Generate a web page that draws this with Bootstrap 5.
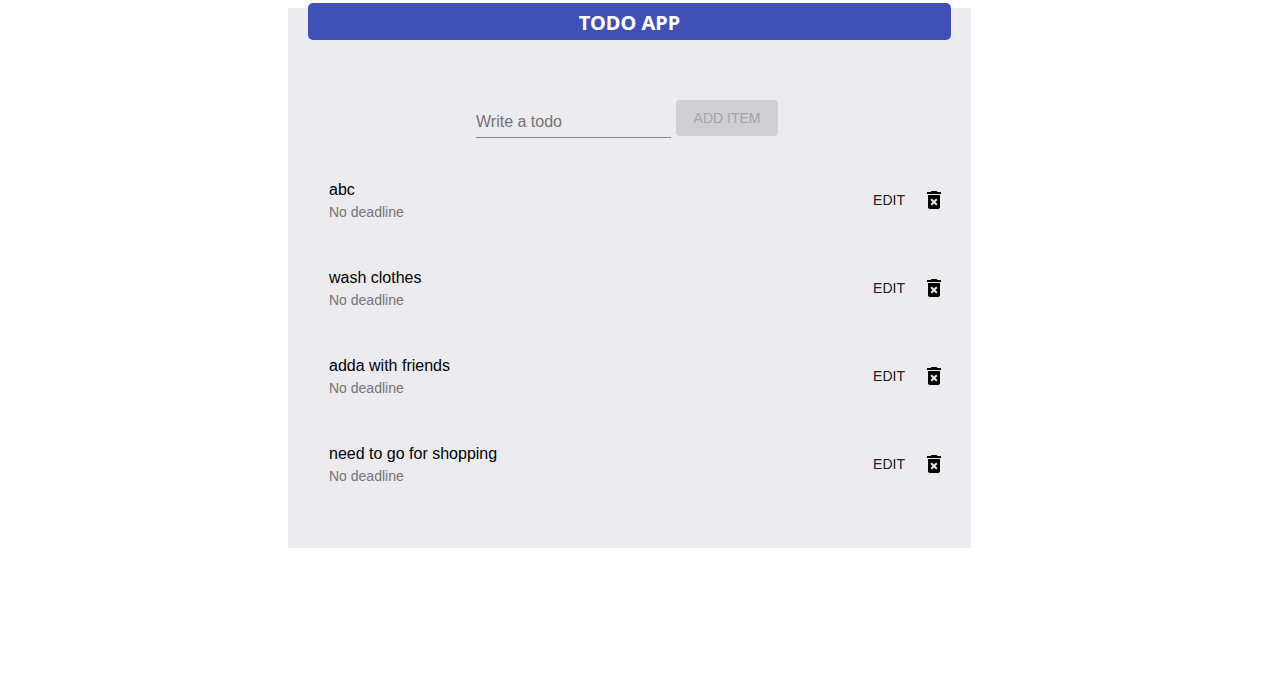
<!DOCTYPE html>
<html lang="en">
<head>
<meta charset="utf-8">
<meta name="viewport" content="width=device-width, initial-scale=1">
<title>Todo App</title>
<link href="https://cdn.jsdelivr.net/npm/bootstrap@5.3.0/dist/css/bootstrap.min.css" rel="stylesheet">
<style>
body { padding: 8px 10px 8px 8px; font-family: "Liberation Sans", Arial, sans-serif; color: #000; background: #fff; }
.todo-panel { max-width: 683px; padding: 0 20px 40px; background: #ecebf0; }
.app-title { margin: -5px 0 60px; border-radius: 5px; padding: 3px 0 0; background: #3f51b5; color: #fff; font: 700 20px/34px "Noto Sans", "Open Sans", sans-serif; }
.todo-form { gap: 5px; margin-bottom: 18px; padding-right: 5px; }
.todo-input { width: 195px; height: 38px; padding: 6px 0 0; border: 0; border-bottom: 1px solid #87868a; border-radius: 0; background: transparent; }
.todo-input::placeholder { color: #747377; opacity: 1; }
.todo-input:focus { outline: 0; border-color: #3f51b5; }
.add-btn { width: 102px; height: 36px; border: 0; border-radius: 4px; padding: 0; background: #d0cfd4; color: #a6a5a8; font-size: 14px; }
.todo-item { height: 88px; padding: 0 5px 0 21px; }
.todo-name { line-height: 24px; }
.todo-note { font-size: 14px; line-height: 20px; color: #747377; }
.edit-btn { width: 66px; height: 36px; border: 0; padding: 0; background: none; color: #212121; font-size: 14px; }
.delete-btn { border: 0; padding: 0; background: none; }
</style>
</head>
<body>
<main class="todo-panel d-flex flex-column mx-auto">
<h1 class="app-title text-center">TODO APP</h1>
<form class="todo-form d-flex justify-content-center">
<input class="todo-input" type="text" placeholder="Write a todo" aria-label="Write a todo">
<button class="add-btn" type="submit" disabled>ADD ITEM</button>
</form>
<ul class="list-unstyled mb-0" id="list"></ul>
</main>
<script src="https://cdn.jsdelivr.net/npm/bootstrap@5.3.0/dist/js/bootstrap.bundle.min.js"></script>
<script>
document.getElementById('list').innerHTML = ['abc', 'wash clothes', 'adda with friends', 'need to go for shopping'].map(t => `
<li class="todo-item d-flex align-items-center">
<div class="me-auto"><div class="todo-name">${t}</div><div class="todo-note">No deadline</div></div>
<button class="edit-btn" type="button">EDIT</button>
<button class="delete-btn" type="button" aria-label="Delete ${t}"><svg class="d-block" width="24" height="24" viewBox="0 0 24 24"><path d="M6 19c0 1.100.9 2 2 2h8c1.100 0 2-.9 2-2V7H6v12zm2.460-7.120l1.410-1.410L12 12.590l2.120-2.120 1.410 1.410L13.410 14l2.120 2.120-1.410 1.410L12 15.410l-2.120 2.120-1.410-1.410L10.590 14l-2.130-2.120zM15.500 4l-1-1h-5l-1 1H5v2h14V4z"/></svg></button>
</li>`).join('');
</script>
</body>
</html>
